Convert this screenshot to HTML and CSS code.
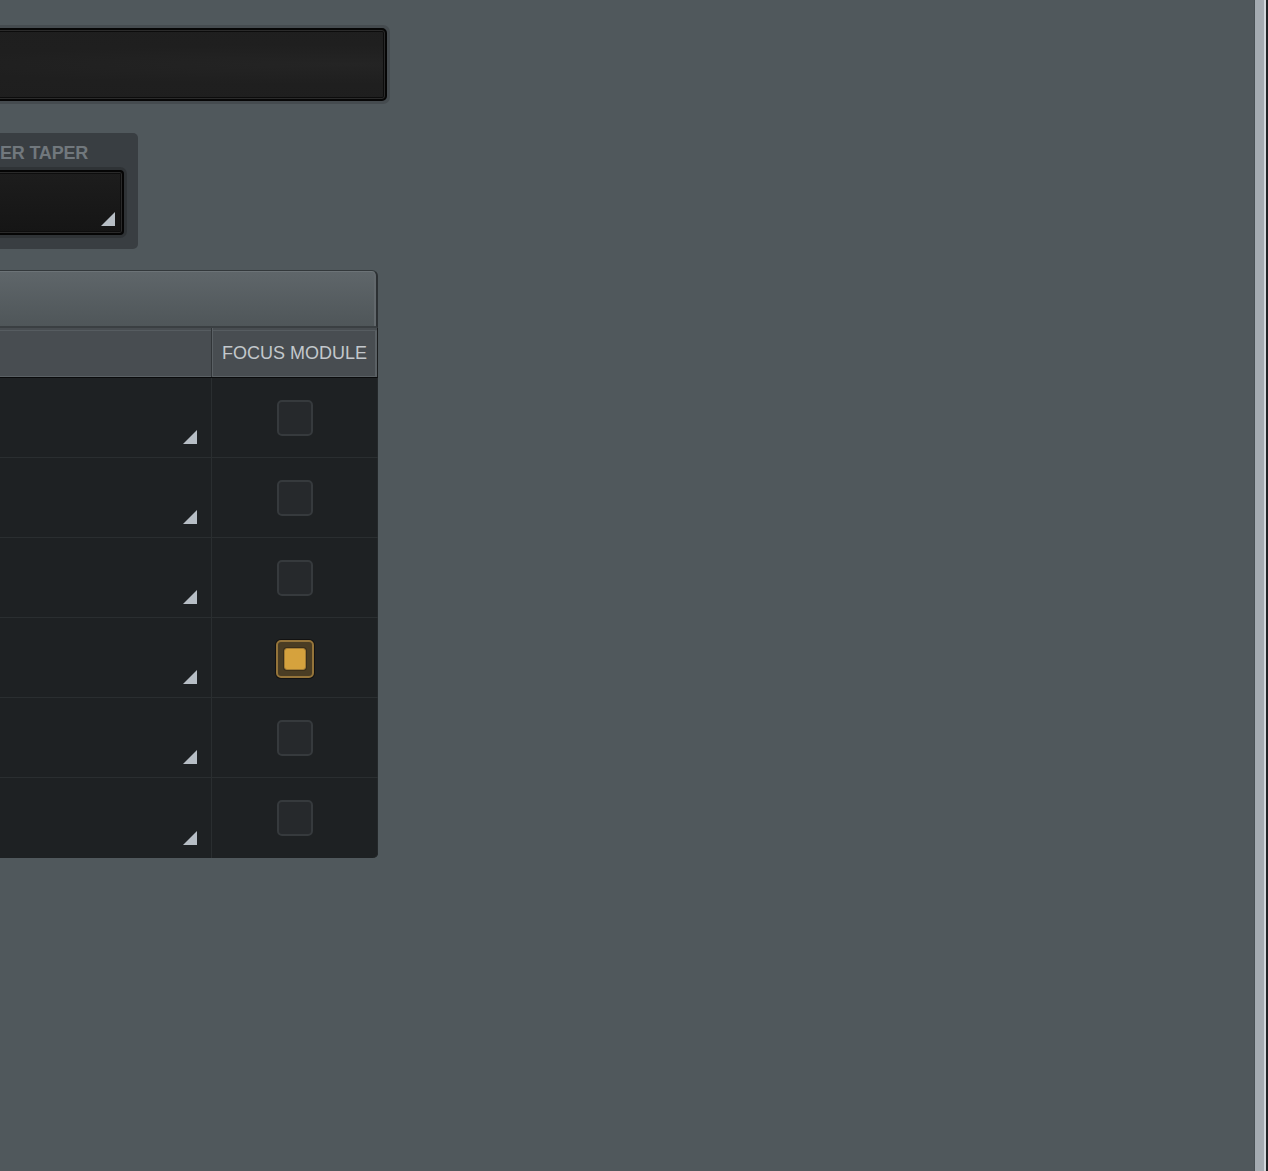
FILE: index.html
```html
<!DOCTYPE html>
<html>
<head>
<meta charset="utf-8">
<link rel="stylesheet" href="styles.css">
</head>
<body>
<div class="app">
  <div class="main">
    <div class="content">
      <div class="field-ring"><div class="field"></div></div>

      <div class="panel">
        <div class="panel-label">ER TAPER</div>
        <div class="dd-ring"><div class="dd"><span class="tri"></span></div></div>
      </div>

      <div class="table">
        <div class="table-bar"></div>
        <div class="table-head">
          <div class="th th-first"></div>
          <div class="th th-focus">FOCUS MODULE</div>
        </div>
        <div class="table-body">
          <div class="row"><div class="cell-sel"><span class="tri"></span></div><div class="cell-chk"><span class="chk"></span></div></div>
          <div class="row"><div class="cell-sel"><span class="tri"></span></div><div class="cell-chk"><span class="chk"></span></div></div>
          <div class="row"><div class="cell-sel"><span class="tri"></span></div><div class="cell-chk"><span class="chk"></span></div></div>
          <div class="row"><div class="cell-sel"><span class="tri"></span></div><div class="cell-chk"><span class="chk chk-on"><span class="chk-dot"></span></span></div></div>
          <div class="row"><div class="cell-sel"><span class="tri"></span></div><div class="cell-chk"><span class="chk"></span></div></div>
          <div class="row"><div class="cell-sel"><span class="tri"></span></div><div class="cell-chk"><span class="chk"></span></div></div>
        </div>
      </div>
    </div>
  </div>
  <div class="scrollbar">
    <div class="sb-edge"></div>
    <div class="sb-track"></div>
    <div class="sb-light"></div>
    <div class="sb-dark"></div>
  </div>
</div>
</body>
</html>
```

FILE: styles.css
```css
html, body {
  margin: 0;
  padding: 0;
  height: 100%;
}

body {
  background: #50585c;
  font-family: "Liberation Sans", Arial, sans-serif;
  overflow: hidden;
}

.app {
  display: flex;
  height: 1171px;
}

.main {
  flex: 1;
  overflow: hidden;
}

.content {
  margin-left: -400px;
  padding-top: 25px;
}

/* Top field */
.field-ring {
  width: 790px;
  height: 79px;
  box-sizing: border-box;
  padding: 3px;
  background: #454b4f;
  border-radius: 7px;
}

.field {
  height: 100%;
  box-sizing: border-box;
  border: 2px solid #060606;
  border-radius: 5px;
  background: radial-gradient(ellipse at 95% 50%, #242424 0%, #1f1f1f 40%, #1e1e1e 100%);
  box-shadow: inset 0 0 0 1px #2b2b2b, inset 0 0 0 2px #0c0c0c;
}

/* Panel with dropdown */
.panel {
  width: 538px;
  margin-top: 29px;
  box-sizing: border-box;
  padding: 10px 11px 11px 0;
  background: #393e42;
  border-radius: 5px;
}

.panel-label {
  padding-left: 400px;
  font-size: 18px;
  line-height: 20px;
  font-weight: bold;
  color: #71787d;
  letter-spacing: -0.2px;
  white-space: nowrap;
}

.dd-ring {
  margin-top: 4px;
  height: 71px;
  box-sizing: border-box;
  padding: 3px;
  background: #2f3336;
  border-radius: 7px;
}

.dd {
  height: 100%;
  box-sizing: border-box;
  border: 2px solid #050505;
  border-radius: 4px;
  background: linear-gradient(#1d1d1d, #151515);
  box-shadow: inset 0 0 0 1px #2a2a2a, inset 0 0 0 2px #0e0e0e;
  display: flex;
  justify-content: flex-end;
  align-items: flex-end;
  padding: 0 7px 7px 0;
}

.tri {
  display: block;
  width: 14px;
  height: 14px;
  background: #b7bec5;
  clip-path: polygon(100% 0, 100% 100%, 0 100%);
}

/* Table */
.table {
  width: 778px;
  margin-top: 21px;
}

.table-bar {
  height: 58px;
  box-sizing: border-box;
  border-top: 1px solid #33383b;
  border-right: 2px solid #2c3033;
  border-bottom: 2px solid #3a3f42;
  border-top-right-radius: 6px;
  background: linear-gradient(#5f666a, #4f5659);
  box-shadow: inset 0 1px 0 #6c7377, inset -2px 0 0 #62686c;
}

.table-head {
  display: grid;
  grid-template-columns: 612px 1fr;
  height: 50px;
  box-sizing: border-box;
  border-bottom: 1px solid #0a0b0c;
  border-right: 1px solid #1a1c1d;
  background: #484d51;
  box-shadow: inset 0 2px 0 #484d51, inset 0 3px 0 #565c60, inset 0 -1px 0 #5a6064, inset -2px 0 0 #5a6064;
}

.th-first {
  border-right: 1px solid #313538;
}

.th-focus {
  box-shadow: inset 1px 0 0 #5a6064;
  display: flex;
  align-items: center;
  justify-content: center;
  font-size: 18px;
  color: #c3c8cc;
  padding-top: 1px;
  white-space: nowrap;
}

.table-body {
  background: #1e2123;
  border-bottom-right-radius: 5px;
  box-shadow: inset -1px 0 0 #24282a;
  overflow: hidden;
}

.row {
  display: grid;
  grid-template-columns: 612px 1fr;
  height: 80px;
  box-sizing: border-box;
  border-bottom: 1px solid #2a2e30;
}

.row:last-child {
  border-bottom: none;
}

.cell-sel {
  border-right: 1px solid #2a2e30;
  display: flex;
  justify-content: flex-end;
  align-items: flex-end;
  padding: 0 14px 13px 0;
}

.cell-chk {
  display: flex;
  align-items: center;
  justify-content: center;
}

.chk {
  display: block;
  width: 36px;
  height: 36px;
  box-sizing: border-box;
  border: 2px solid #363a3d;
  border-radius: 5px;
  background: #26292c;
}

.chk-on {
  width: 38px;
  height: 38px;
  border: 2px solid #94743a;
  background: #4a3d24;
  box-shadow: 0 0 0 1px #121212;
  display: flex;
  align-items: center;
  justify-content: center;
  margin-top: 2px;
}

.chk-dot {
  display: block;
  width: 22px;
  height: 22px;
  box-sizing: border-box;
  background: #d6a23d;
  border: 1px solid #a57d33;
  border-radius: 3px;
  box-shadow: 0 0 0 1px #3a2f1b;
}

/* Right edge strip */
.scrollbar {
  display: flex;
  width: 14px;
  flex: none;
}

.sb-edge { width: 1px; background: #485054; }
.sb-track { width: 9px; background: #a4abb1; }
.sb-light { width: 2px; background: #d1d6da; }
.sb-dark { width: 2px; background: #1e2224; }
```
